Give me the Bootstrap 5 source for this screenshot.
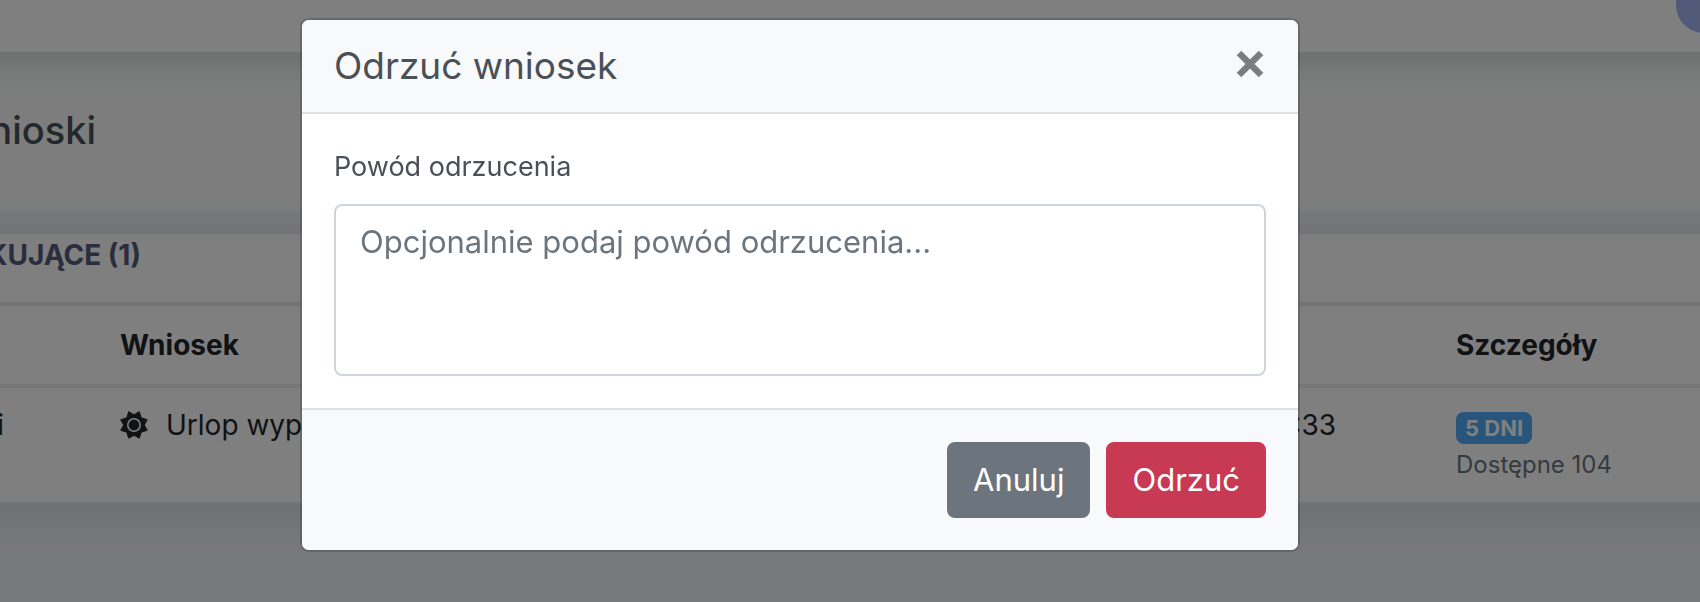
<!DOCTYPE html>
<html lang="pl">
<head>
<meta charset="utf-8">
<meta name="viewport" content="width=device-width, initial-scale=1">
<title>Wnioski</title>
<link href="https://cdn.jsdelivr.net/npm/bootstrap@5.3.0/dist/css/bootstrap.min.css" rel="stylesheet">
<style>
  body {
    --bs-body-font-family: Inter, "Liberation Sans", sans-serif;
    --bs-border-width: 2px;
    background: #f1f2f5;
    color: #212529;
    font-size: 28px;
    line-height: 42px;
    overflow: hidden;
    min-height: 100vh;
  }
  .bleed { margin-inline: -60px; padding-inline: 60px; }
  .topbar { height: 52px; position: relative; z-index: 1; box-shadow: 0 2px 40px rgba(0, 0, 0, .2); }
  .avatar { position: absolute; right: 28px; bottom: 19px; width: 56px; height: 56px; background: #a0b3ef; }
  .page-head { height: 160px; background: #f8faf9; }
  .page-head h1 { font-size: 38px; line-height: 48px; color: #495057; }
  .cut-start { width: 96px; display: flex; justify-content: flex-end; white-space: nowrap; }
  .panel { margin-top: 20px; border: solid #e6e8ec; border-width: 2px 0; box-shadow: 0 8px 40px rgba(0, 0, 0, .12); }
  .tabs { height: 68px; }
  .tabs a { width: 141px; font-size: 28px; color: #525a7a; }
  .requests { table-layout: fixed; --bs-table-color: #212529; border-top: 4px solid #e6e8ec; }
  .requests > :not(caption) > * > * { padding: 16px 24px; border-bottom: 0; vertical-align: top; }
  .requests > thead > tr > th { padding-block: 18px; border-bottom: 4px solid #eee; font-weight: 700; }
  .requests .col-person { width: 96px; }
  .requests .col-details { width: 268px; }
  .requests > tbody > tr > .person { padding-inline: 0; }
  .person div { width: 4px; display: flex; justify-content: flex-end; }
  .requests > tbody > tr > .when { padding-right: 96px; }
  .leave { gap: 18px; }
  .days-line { height: 40px; }
  .days { font-size: 22px; line-height: 32px; padding: 0 9px; border-radius: 8px; background: #4eaaf9; }
  .available { font-size: 24px; line-height: 42px; color: #6c757d; }

  .modal { padding-right: 100px; }
  .modal-dialog { max-width: 1000px; margin-block: 18px; }
  .modal-content { border-radius: 9px; --bs-modal-inner-border-radius: 7px; color: #495057; }
  .modal-header, .modal-footer { background: #f8f9fb; border-color: #dee2e6; }
  .modal-header { padding: 22px 32px; }
  .modal-title { font-size: 37px; line-height: 48px; font-weight: 400; }
  .modal-body { padding: 32px; }
  .modal-footer { padding: 32px; gap: 16px; }
  .modal-footer > * { margin: 0; }
  .dismiss { color: #7c7d7d; margin-bottom: 4px; }
  .modal .form-label { font-size: 27px; margin-bottom: 16px; display: block; }
  .modal textarea.form-control { height: 172px; font-size: 31px; line-height: 48px; padding: 12px 24px; border-color: #ced4da; border-radius: 8px; resize: none; }
  .modal textarea::placeholder { color: #6c757d; }
  .modal .btn { font-size: 31px; line-height: 48px; padding: 12px 24px; border-radius: 8px; }
  .btn-reject { --bs-btn-bg: #c83a54; --bs-btn-border-color: #c83a54; --bs-btn-color: #fff; --bs-btn-hover-bg: #b0304a; --bs-btn-hover-color: #fff; }
</style>
</head>
<body>
<nav class="topbar bleed bg-white">
  <span class="avatar rounded-circle"></span>
</nav>

<header class="page-head d-flex align-items-center">
  <h1 class="cut-start mb-1">Wnioski</h1>
</header>

<main class="panel bleed bg-white">
  <div class="tabs d-flex align-items-start">
    <a href="#waiting" class="cut-start fw-bold text-decoration-none">OCZEKUJĄCE (1)</a>
  </div>
  <table class="table requests mb-0">
    <colgroup><col class="col-person"><col><col><col class="col-details"></colgroup>
    <thead>
      <tr><th></th><th>Wniosek</th><th></th><th>Szczegóły</th></tr>
    </thead>
    <tbody>
      <tr>
        <td class="person"><div>i</div></td>
        <td class="text-nowrap">
          <span class="leave d-flex align-items-center">
            <svg width="28" height="28" viewBox="0 0 28 28" aria-hidden="true">
              <path fill="currentColor" stroke="currentColor" stroke-linejoin="round" d="M8.700.700 14 3.700 19.300.700 21.200 6.800 27.200 8.700 24.300 14 27.200 19.300 21.200 21.200 19.300 27.200 14 24.300 8.700 27.200 6.800 21.200.700 19.300 3.700 14 .700 8.700 6.800 6.800Z"/>
              <circle cx="14" cy="14" r="6.200" fill="none" stroke="#fff" stroke-width="1.600"/>
            </svg>
            Urlop wypoczynkowy
          </span>
        </td>
        <td class="when text-end">10:33</td>
        <td>
          <div class="days-line d-flex align-items-end"><span class="badge days">5 DNI</span></div>
          <div class="available text-nowrap">Dostępne 104</div>
        </td>
      </tr>
    </tbody>
  </table>
</main>

<div class="modal-backdrop show"></div>
<div class="modal show d-block" tabindex="-1" role="dialog" aria-modal="true" aria-labelledby="rejectTitle">
  <div class="modal-dialog">
    <form class="modal-content">
      <div class="modal-header">
        <h2 class="modal-title" id="rejectTitle">Odrzuć wniosek</h2>
        <button type="button" class="dismiss border-0 bg-transparent p-0 d-flex" aria-label="Zamknij">
          <svg width="32" height="32" viewBox="0 0 32 32" aria-hidden="true"><path d="M5 5 27 27M27 5 5 27" stroke="currentColor" stroke-width="6.500"/></svg>
        </button>
      </div>
      <div class="modal-body">
        <label class="form-label" for="reason">Powód odrzucenia</label>
        <textarea class="form-control" id="reason" placeholder="Opcjonalnie podaj powód odrzucenia..."></textarea>
      </div>
      <div class="modal-footer">
        <button type="button" class="btn btn-secondary">Anuluj</button>
        <button type="submit" class="btn btn-reject">Odrzuć</button>
      </div>
    </form>
  </div>
</div>
<script src="https://cdn.jsdelivr.net/npm/bootstrap@5.3.0/dist/js/bootstrap.bundle.min.js"></script>
</body>
</html>
